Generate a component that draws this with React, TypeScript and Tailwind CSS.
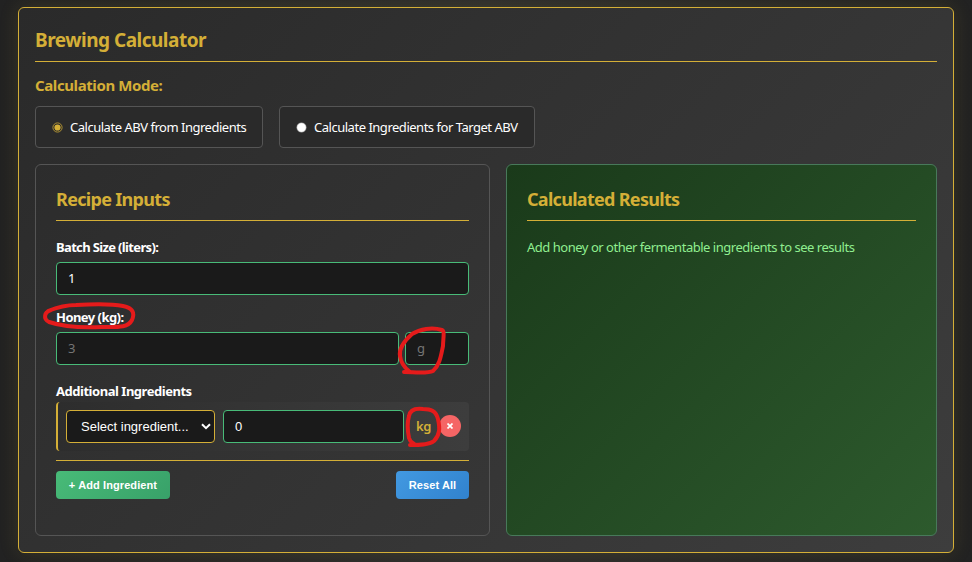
import React from 'react';

function PanelTitle({ children, className = '' }: { children: React.ReactNode; className?: string }) {
  return (
    <h3 className="flex h-[36px] items-start border-b border-[#d4af37] text-[18px] font-bold leading-[28px] text-[#d4af37]">
      <span className={className}>{children}</span>
    </h3>
  );
}

function Mode({ label, checked, className }: { label: string; checked?: boolean; className: string }) {
  return (
    <label className={`flex h-[42px] items-center rounded-[4px] border border-[#555] bg-[#2a2a2a] pl-4 text-[13px] text-white ${className}`}>
      <svg width="11" height="11" viewBox="0 0 11 11" className="shrink-0">
        {checked ? (
          <>
            <circle cx="5.5" cy="5.5" r="4.6" fill="none" stroke="#d4af37" strokeWidth="1" opacity=".75" />
            <circle cx="5.5" cy="5.5" r="3.1" fill="#d4af37" />
          </>
        ) : (
          <circle cx="5.5" cy="5.5" r="4.8" fill="#fff" stroke="#767676" strokeWidth=".5" />
        )}
      </svg>
      <span className="ml-[7px] whitespace-nowrap pt-0.5">{label}</span>
    </label>
  );
}

const field = 'h-[33px] rounded-[4px] border border-[#48bb78] bg-[#1a1a1a] px-[11px] text-[13px] leading-[31px]';

export default function App() {
  return (
    <div className="relative h-[562px] w-[972px] overflow-hidden bg-linear-to-r from-[#222] via-[#2d2d2d] to-[#222] pl-[18px] pt-[7px] font-['Noto_Sans','Open_Sans',sans-serif]">
      <main className="h-[546px] w-[936px] rounded-[6px] border border-[#d4af37] bg-linear-135 from-[#2a2a2a] to-[#3d3d3d] px-4 pt-4 shadow-[0_0_20px_rgba(212,175,55,0.13)]">
        <h2 className="h-[38px] border-b border-[#d4af37] text-[19px] font-bold leading-[32px] text-[#d4af37]">
          <span className="tracking-[-0.5px]">Brewing Calculator</span>
        </h2>
        <div className="mt-[12px] h-[32px] text-[15px] font-bold leading-[22px] text-[#d4af37]">
          <span className="tracking-[-0.4px]">Calculation Mode:</span>
        </div>
        <div className="flex gap-4">
          <Mode className="w-[228px] tracking-[-0.48px]" checked label="Calculate ABV from Ingredients" />
          <Mode className="w-[256px] tracking-[-0.48px]" label="Calculate Ingredients for Target ABV" />
        </div>
        <div className="mt-4 flex h-[372px] gap-4">
          <section className="w-[455px] rounded-[6px] border border-[#555] px-5 pt-5">
            <PanelTitle className="tracking-[-0.68px]">Recipe Inputs</PanelTitle>
            <div className="mt-4 h-[25px] text-[13px] font-bold leading-[20px] text-white">
              <span className="tracking-[-0.65px]">Batch Size (liters):</span>
            </div>
            <div className={`${field} text-white`}>1</div>
            <div className="mt-3 h-[25px] text-[13px] font-bold leading-[20px] text-white">
              <span className="tracking-[-0.55px]">Honey (kg):</span>
            </div>
            <div className="flex gap-1.5">
              <div className={`${field} w-[343px] text-[#757575]`}>3</div>
              <div className={`${field} w-[64px] text-[#757575]`}>g</div>
            </div>
            <div className="mt-4 h-[21px] text-[13px] font-bold leading-[20px] text-white">
              <span className="tracking-[-0.47px]">Additional Ingredients</span>
            </div>
            <div className="flex h-[49px] items-center rounded-[4px] border-l-2 border-[#d4af37] bg-linear-to-r from-[#2d2d2d] to-[#3d3d3d] pl-2">
              <div className="flex h-[33px] w-[149px] items-center justify-between rounded-[4px] border border-[#d4af37] bg-[#1a1a1a] pl-[14px] pr-[3px] font-['Liberation_Sans',sans-serif] text-[13px] text-white">
                <span className="whitespace-nowrap">Select ingredient...</span>
                <svg width="10" height="7" viewBox="0 0 10 7">
                  <path d="M1 1.2 5 5.2 9 1.2" fill="none" stroke="#fff" strokeWidth="2" />
                </svg>
              </div>
              <div className={`${field} ml-2 w-[181px] font-['Liberation_Sans',sans-serif] text-white`}>0</div>
              <span className="ml-[12px] w-[15px] text-[13px] font-semibold tracking-[-0.5px] text-[#d4af37]">kg</span>
              <span className="mb-px ml-[8px] flex size-[22px] items-center justify-center rounded-full bg-[#f56565] text-white">
                <svg width="6" height="6" viewBox="0 0 6 6">
                  <path d="M.5.5 5.5 5.5M5.5.5.5 5.5" stroke="#fff" strokeWidth="1.7" />
                </svg>
              </span>
            </div>
            <div className="mt-[9px] flex justify-between border-t border-[#d4af37] pt-[10px] font-['Liberation_Sans',sans-serif] text-[11px] font-bold text-white">
              <button className="h-7 w-[114px] whitespace-nowrap rounded-[4px] bg-linear-135 from-[#48bb78] to-[#38a169] tracking-[0.1px]">+ Add Ingredient</button>
              <button className="h-7 w-[73px] whitespace-nowrap rounded-[4px] bg-linear-135 from-[#4299e1] to-[#3182ce] tracking-[0.1px]">Reset All</button>
            </div>
          </section>
          <section className="w-[431px] rounded-[6px] border border-[#48795a] bg-linear-135 from-[#1a3a1a] to-[#2d5a2d] px-5 pt-5">
            <PanelTitle className="tracking-[-0.7px]">Calculated Results</PanelTitle>
            <p className="mt-4 text-[13px] leading-[20px] text-[#90ee90]">
              <span className="tracking-[-0.48px]">Add honey or other fermentable ingredients to see results</span>
            </p>
          </section>
        </div>
      </main>
      <svg className="pointer-events-none absolute inset-0" width="972" height="562" fill="none" stroke="#e51b1b" strokeWidth="4" strokeLinecap="round" strokeLinejoin="round">
        <path d="M48 311C58 307 67 305 76 305C93 304 113 304 123 306C133 308 135 313 132 320C128 328 118 327 102 327C82 328 61 326 49 322C43 319 44 312 51 310" />
        <path d="M404 372C413 372 427 374 433 371C440 365 441 355 443 346C443 339 445 331 442 330C432 327 420 329 412 334C403 342 399 350 400 356C401 363 405 368 409 371" />
        <path d="M410 445C419 445 429 445 434 441C440 435 440 428 438 419C436 411 431 409 423 409C415 408 410 410 409 416C407 423 408 433 409 438C410 442 413 443 414 444" />
      </svg>
    </div>
  );
}
